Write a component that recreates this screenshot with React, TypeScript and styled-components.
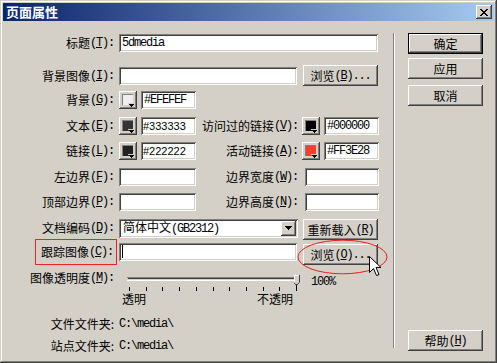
import React from 'react'
import styled, { createGlobalStyle, css } from 'styled-components'

const GlobalStyle = createGlobalStyle`
  html, body {
    margin: 0;
    padding: 0;
    background: #d4d0c8;
  }
  body {
    font-family: "Noto Sans CJK SC", "Liberation Sans", sans-serif;
    font-size: 12px;
    color: #000;
  }
  * {
    box-sizing: border-box;
  }
`

const raised = css`
  background: #d4d0c8;
  box-shadow: inset -1px -1px #404040, inset 1px 1px #ffffff,
    inset -2px -2px #808080, inset 2px 2px #d4d0c8;
`

const sunken = css`
  background: #ffffff;
  box-shadow: inset 1px 1px #808080, inset -1px -1px #ffffff,
    inset 2px 2px #404040, inset -2px -2px #d4d0c8;
`

const mono = css`
  font-family: "Liberation Mono", monospace;
  font-size: 12px;
  letter-spacing: -1.2px;
`

const Window = styled.div`
  width: 497px;
  height: 363px;
  padding: 3px;
  background: #d4d0c8;
  box-shadow: inset -1px -1px #404040, inset 1px 1px #d4d0c8,
    inset -2px -2px #808080, inset 2px 2px #ffffff;
  display: flex;
  flex-direction: column;
  overflow: hidden;
`

const TitleBar = styled.div`
  height: 18px;
  flex: none;
  display: flex;
  align-items: center;
  justify-content: space-between;
  padding: 0 2px 0 3px;
  background: linear-gradient(to right, #0a246a, #a6caf0);
`

const TitleText = styled.span`
  color: #ffffff;
  font-weight: 700;
  font-size: 13px;
  line-height: 18px;
`

const CloseButton = styled.div`
  ${raised};
  width: 16px;
  height: 14px;
  display: flex;
  align-items: center;
  justify-content: center;
`

const Body = styled.div`
  flex: 1;
  display: flex;
`

const Form = styled.div`
  width: 390px;
  flex: none;
  padding: 10px 0 0 5px;
`

const Separator = styled.div`
  width: 2px;
  height: 315px;
  margin-top: 12px;
  flex: none;
  border-left: 1px solid #808080;
  border-right: 1px solid #ffffff;
`

const Side = styled.div`
  display: flex;
  flex-direction: column;
  padding: 12px 0 9px 13px;
`

const Spacer = styled.div`
  flex: 1;
`

const Row = styled.div<{ $h: number; $mt?: number; $top?: boolean }>`
  display: flex;
  align-items: ${(p) => (p.$top ? 'flex-start' : 'center')};
  height: ${(p) => p.$h}px;
  margin-top: ${(p) => p.$mt ?? 0}px;
`

const Label = styled.div<{ $w?: number }>`
  width: ${(p) => p.$w ?? 108}px;
  flex: none;
  display: flex;
  justify-content: flex-end;
  align-items: center;
  padding-right: 2px;
  white-space: nowrap;
  line-height: 14px;
`

const Marked = styled.span`
  display: inline-flex;
  align-items: center;
  height: 26px;
  padding: 0 3px 0 5px;
  margin-right: -3px;
  border: 1px solid #ee2222;
`

const Mono = styled.span`
  ${mono};
`

const Field = styled.div<{ $w: number; $ml?: number; $sans?: boolean }>`
  ${sunken};
  width: ${(p) => p.$w}px;
  height: 18px;
  flex: none;
  margin-left: ${(p) => p.$ml ?? 0}px;
  display: flex;
  align-items: center;
  padding: 0 3px;
  white-space: nowrap;
  ${(p) =>
    p.$sans
      ? css`
          font-family: "Liberation Sans", sans-serif;
          font-size: 11px;
          padding-left: 2px;
        `
      : mono};
`

const Caret = styled.span`
  width: 1px;
  height: 13px;
  background: #000;
`

const PushButton = styled.button<{ $ml?: number; $mt?: number; $default?: boolean; $end?: boolean }>`
  ${raised};
  width: 75px;
  height: 21px;
  flex: none;
  margin: ${(p) => p.$mt ?? 0}px 0 0 ${(p) => p.$ml ?? 0}px;
  align-self: ${(p) => (p.$end ? 'flex-end' : 'auto')};
  border: none;
  padding: 0;
  font: inherit;
  color: #000;
  line-height: 14px;
  display: flex;
  align-items: center;
  justify-content: center;
  white-space: nowrap;
  ${(p) =>
    p.$default &&
    css`
      box-shadow: inset 0 0 0 1px #000000, inset -2px -2px #404040,
        inset 2px 2px #ffffff, inset -3px -3px #808080;
    `}
`

const SwatchButton = styled.div<{ $ml: number }>`
  ${raised};
  width: 18px;
  height: 18px;
  flex: none;
  margin-left: ${(p) => p.$ml}px;
`

const Select = styled.div`
  ${sunken};
  width: 179px;
  height: 19px;
  flex: none;
  margin-left: 3px;
  display: flex;
  align-items: center;
  padding: 2px 2px 2px 4px;
  white-space: nowrap;
`

const SelectText = styled.span`
  flex: 1;
  line-height: 14px;
`

const DropButton = styled.span`
  ${raised};
  width: 15px;
  height: 15px;
  display: flex;
  align-items: center;
  justify-content: center;
`

const Annotated = styled.div`
  position: relative;
  margin-left: 6px;
  align-self: flex-end;
`

const Ellipse = styled.svg`
  position: absolute;
  left: -6px;
  top: -5px;
  pointer-events: none;
`

const Pointer = styled.svg`
  position: absolute;
  left: 66px;
  top: 12px;
  pointer-events: none;
`

const SliderBox = styled.div`
  width: 182px;
  margin-left: 3px;
  flex: none;
  display: flex;
  flex-direction: column;
`

const SliderLabels = styled.div`
  display: flex;
  justify-content: space-between;
  padding: 0 8px 0 3px;
  line-height: 13px;
`

const Percent = styled.span`
  ${mono};
  margin: 5px 0 0 10px;
  line-height: 12px;
`

const Value = styled.span`
  ${mono};
  margin-left: 3px;
  line-height: 14px;
`

const Key = ({ k, tail = ':' }: { k: string; tail?: string }) => (
  <Mono>
    (<u>{k}</u>){tail}
  </Mono>
)

const CloseGlyph = () => {
  const cells: [number, number, number][] = [
    [0, 0, 2], [6, 0, 2], [1, 1, 2], [5, 1, 2], [2, 2, 4], [3, 3, 2],
    [2, 4, 4], [1, 5, 2], [5, 5, 2], [0, 6, 2], [6, 6, 2],
  ]
  return (
    <svg width="8" height="7" shapeRendering="crispEdges">
      {cells.map(([x, y, w], i) => (
        <rect key={i} x={x} y={y} width={w} height="1" fill="#000" />
      ))}
    </svg>
  )
}

const Swatch = ({ color, ml }: { color: string; ml: number }) => (
  <SwatchButton $ml={ml}>
    <svg width="18" height="18" shapeRendering="crispEdges">
      <rect x="3" y="3" width="11" height="11" fill="#808080" />
      <rect x="4" y="4" width="10" height="10" fill={color} />
      <rect x="9" y="12" width="7" height="1" fill="#d4d0c8" />
      <rect x="10" y="13" width="5" height="1" fill="#000" />
      <rect x="11" y="14" width="3" height="1" fill="#000" />
      <rect x="12" y="15" width="1" height="1" fill="#000" />
    </svg>
  </SwatchButton>
)

const SliderArt = () => {
  const ticks = Array.from({ length: 11 }, (_, i) => Math.round(10 + i * 16.7))
  return (
    <svg width="182" height="21" shapeRendering="crispEdges">
      <rect x="8" y="6" width="170" height="1" fill="#808080" />
      <rect x="9" y="7" width="168" height="1" fill="#404040" />
      <rect x="8" y="9" width="171" height="1" fill="#ffffff" />
      <rect x="178" y="6" width="1" height="4" fill="#ffffff" />
      {ticks.map((x, i) => (
        <rect
          key={i}
          x={x}
          y={i === 10 ? 11 : 16}
          width="1"
          height={i === 10 ? 9 : 4}
          fill="#000"
        />
      ))}
      <g shapeRendering="auto">
        <path d="M175 4 H180 V11 L177.5 13.5 L175 11 Z" fill="#d4d0c8" />
        <path d="M175.5 11 V4.5 H179.5" fill="none" stroke="#ffffff" />
        <path d="M180.5 4 V11.3 L177.5 14.3 L175 11.8" fill="none" stroke="#404040" />
      </g>
    </svg>
  )
}

export default function App() {
  return (
    <>
      <GlobalStyle />
      <Window>
        <TitleBar>
          <TitleText>页面属性</TitleText>
          <CloseButton>
            <CloseGlyph />
          </CloseButton>
        </TitleBar>
        <Body>
          <Form>
            <Row $h={24}>
              <Label>标题<Key k="T" /></Label>
              <Field $w={259} $ml={3}>5dmedia</Field>
            </Row>
            <Row $h={23} $mt={9}>
              <Label>背景图像<Key k="I" /></Label>
              <Field $w={178} $ml={3} />
              <PushButton $ml={6}>浏览<Key k="B" tail="..." /></PushButton>
            </Row>
            <Row $h={24} $mt={1}>
              <Label>背景<Key k="G" /></Label>
              <Swatch color="#efefef" ml={3} />
              <Field $w={55} $ml={4}>#EFEFEF</Field>
            </Row>
            <Row $h={24} $mt={2}>
              <Label>文本<Key k="E" /></Label>
              <Swatch color="#333333" ml={3} />
              <Field $w={55} $ml={4} $sans>#333333</Field>
              <Label $w={104}>访问过的链接<Key k="V" /></Label>
              <Swatch color="#000000" ml={2} />
              <Field $w={55} $ml={4}>#000000</Field>
            </Row>
            <Row $h={24} $mt={1}>
              <Label>链接<Key k="L" /></Label>
              <Swatch color="#222222" ml={3} />
              <Field $w={55} $ml={4} $sans>#222222</Field>
              <Label $w={104}>活动链接<Key k="A" /></Label>
              <Swatch color="#ff3e28" ml={2} />
              <Field $w={55} $ml={4}>#FF3E28</Field>
            </Row>
            <Row $h={24} $mt={2}>
              <Label>左边界<Key k="F" /></Label>
              <Field $w={77} $ml={3} />
              <Label $w={104}>边界宽度<Key k="W" /></Label>
              <Field $w={74} $ml={5} />
            </Row>
            <Row $h={24} $mt={1}>
              <Label>顶部边界<Key k="P" /></Label>
              <Field $w={77} $ml={3} />
              <Label $w={104}>边界高度<Key k="N" /></Label>
              <Field $w={74} $ml={5} />
            </Row>
            <Row $h={24} $mt={2}>
              <Label>文档编码<Key k="D" /></Label>
              <Select>
                <SelectText>
                  简体中文<Mono>(GB2312)</Mono>
                </SelectText>
                <DropButton>
                  <svg width="7" height="4" shapeRendering="crispEdges">
                    <path d="M0 0 H7 V1 H6 V2 H5 V3 H4 V4 H3 V3 H2 V2 H1 V1 H0 Z" fill="#000" />
                  </svg>
                </DropButton>
              </Select>
              <PushButton $ml={5} $end>重新载入<Key k="R" tail="" /></PushButton>
            </Row>
            <Row $h={27} $mt={-2}>
              <Label>
                <Marked>跟踪图像<Key k="C" /></Marked>
              </Label>
              <Field $w={178} $ml={3}>
                <Caret />
              </Field>
              <Annotated>
                <PushButton>浏览<Key k="O" tail="..." /></PushButton>
                <Ellipse width="92" height="36">
                  <ellipse cx="45.5" cy="18" rx="44.5" ry="16.8" fill="none" stroke="#ee1c1c" />
                </Ellipse>
                <Pointer width="13" height="21">
                  <path
                    d="M0.5 0.5 V16.5 L4.5 12.5 L7.5 19.5 L10 18.5 L7 11.5 H12 Z"
                    fill="#ffffff"
                    stroke="#000"
                    strokeLinejoin="miter"
                  />
                </Pointer>
              </Annotated>
            </Row>
            <Row $h={34} $mt={6} $top>
              <Label>图像透明度<Key k="M" /></Label>
              <SliderBox>
                <SliderArt />
                <SliderLabels>
                  <span>透明</span>
                  <span>不透明</span>
                </SliderLabels>
              </SliderBox>
              <Percent>100%</Percent>
            </Row>
            <Row $h={14} $mt={12}>
              <Label>文件文件夹:</Label>
              <Value>{'C:\\media\\'}</Value>
            </Row>
            <Row $h={14} $mt={8}>
              <Label>站点文件夹:</Label>
              <Value>{'C:\\media\\'}</Value>
            </Row>
          </Form>
          <Separator />
          <Side>
            <PushButton $default>确定</PushButton>
            <PushButton $mt={4}>应用</PushButton>
            <PushButton $mt={6}>取消</PushButton>
            <Spacer />
            <PushButton>帮助<Key k="H" tail="" /></PushButton>
          </Side>
        </Body>
      </Window>
    </>
  )
}
